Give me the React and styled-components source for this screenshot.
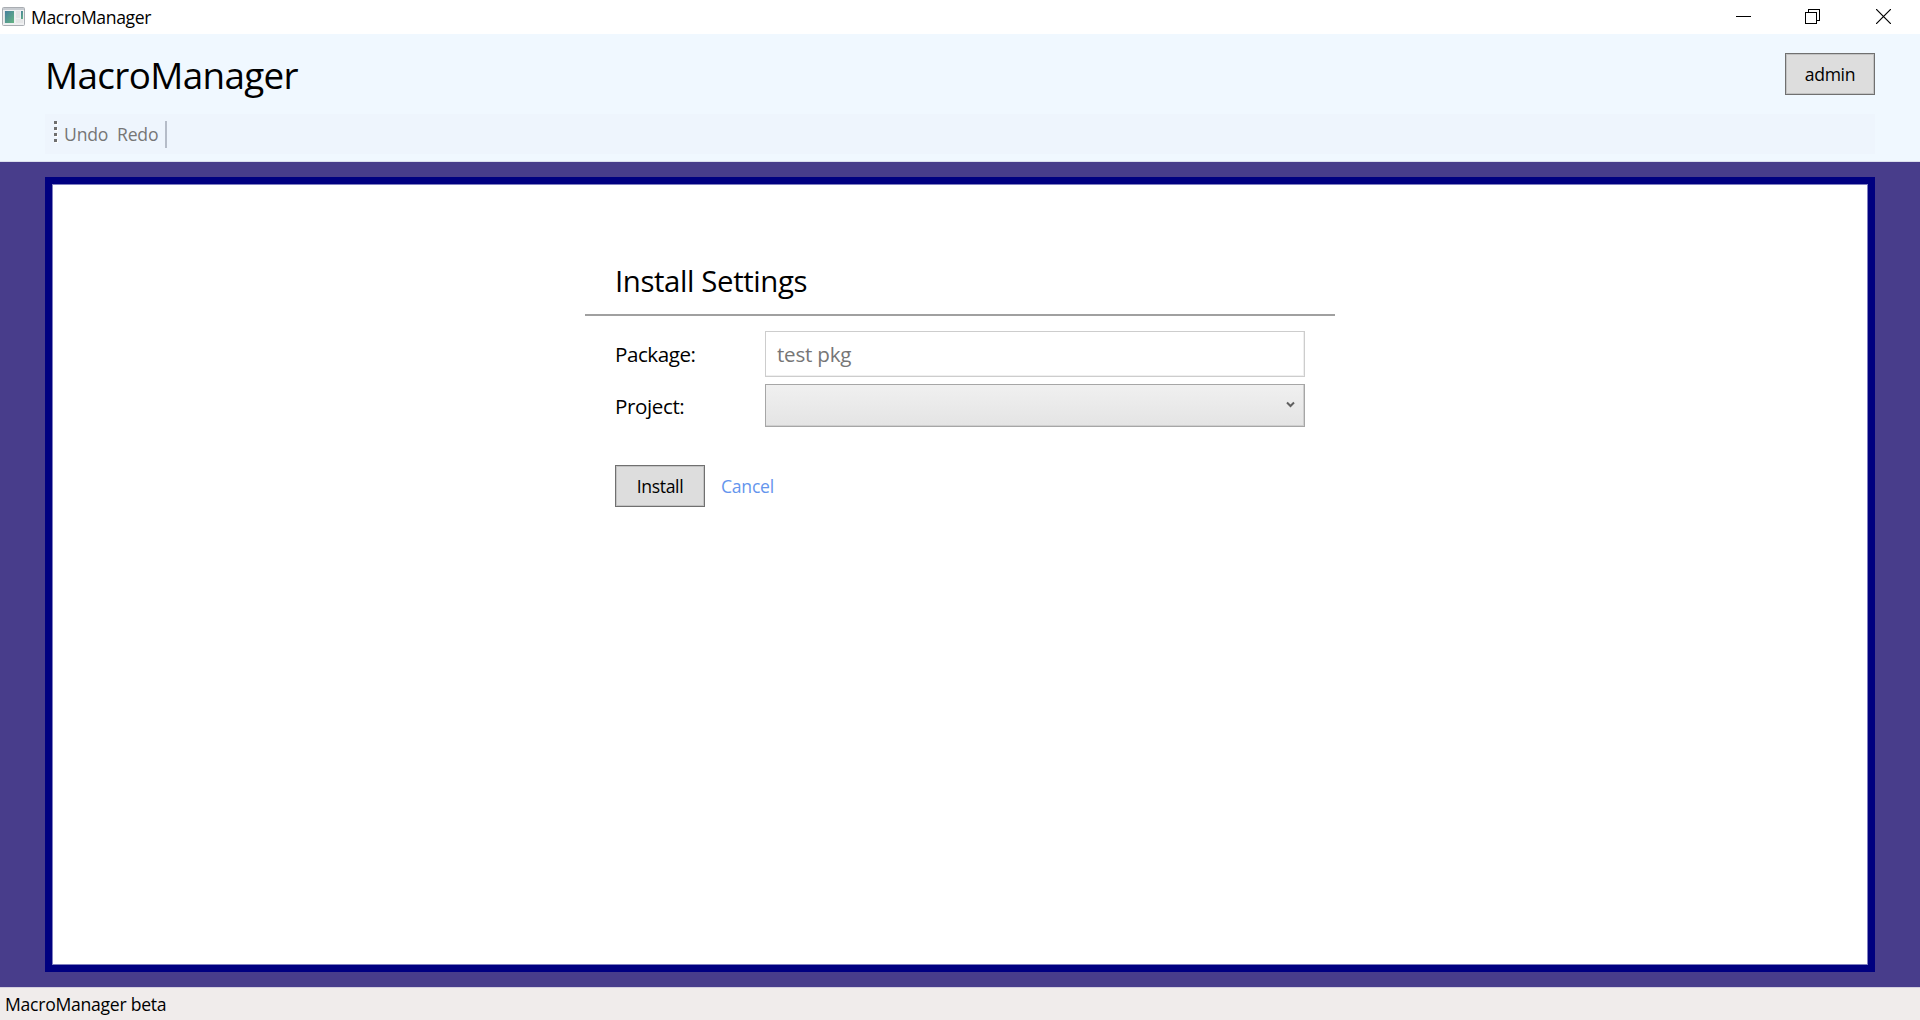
import React from 'react';
import styled, { createGlobalStyle } from 'styled-components';

const GlobalStyle = createGlobalStyle`
  * { box-sizing: border-box; }
  body { margin: 0; overflow: hidden; }
  button, input { font: inherit; letter-spacing: inherit; }
`;

const Window = styled.div`
  display: flex;
  flex-direction: column;
  width: 1920px;
  height: 1020px;
  background: #483d8b;
  color: #000;
  font-family: 'Open Sans', 'Noto Sans', sans-serif;
  font-size: 17.6px;
  line-height: 24px;
  letter-spacing: -0.27px;
  white-space: nowrap;
`;

const TitleBar = styled.div`
  display: flex;
  align-items: center;
  height: 34px;
  padding: 0 29px 0 2px;
  background: #fff;
`;

const Caption = styled.span`
  flex: 1;
  margin-left: 6px;
  letter-spacing: -0.38px;
`;

const Controls = styled.div`
  display: flex;
  align-items: center;
  margin-bottom: 1px;
  svg { display: block; }
  svg + svg { margin-left: 54px; }
  svg:last-child { margin-left: 56px; }
`;

const Header = styled.header`
  height: 128px;
  padding: 0 45px;
  background: #f0f8ff;
  border-bottom: 1px solid #dcdfee;
`;

const Brand = styled.div`
  display: flex;
  align-items: center;
  justify-content: space-between;
  height: 80px;
`;

const AppName = styled.h1`
  margin: 0;
  padding-top: 2px;
  font-size: 36.8px;
  font-weight: 400;
  line-height: 50px;
  letter-spacing: -0.63px;
`;

const Toolbar = styled.div`
  display: flex;
  align-items: center;
  height: 40px;
  padding-left: 9px;
  background: #eef5fd;
  color: #767676;
`;

const Grip = styled.svg`
  display: block;
  margin-bottom: 4px;
`;

const Tool = styled.span`
  width: ${(p) => p.$width}px;
  margin-left: ${(p) => p.$gap}px;
  letter-spacing: -0.2px;
`;

const Divider = styled.span`
  width: 2px;
  height: 27px;
  margin-left: 6px;
  background: #b5bcc8;
`;

const Button = styled.button`
  width: 90px;
  height: 42px;
  padding: 0;
  border: 1px solid #707070;
  border-radius: 0;
  box-shadow: inset 0 0 0 1px #c2c2c2;
  background: #ddd;
  color: #000;
  text-align: center;
  letter-spacing: -0.35px;
`;

const Content = styled.main`
  flex: 1;
  padding: 15px 45px;
  display: flex;
`;

const Panel = styled.section`
  flex: 1;
  border: 7px solid #000080;
  box-shadow: inset 0 0 0 1px #8080c0;
  background: #fff;
`;

const Form = styled.form`
  width: 750px;
  margin: 71px auto 0;
`;

const FormTitle = styled.h2`
  height: 61px;
  margin: 0;
  padding: 6px 30px 0;
  border-bottom: 2px solid #a0a0a0;
  font-size: 29.4px;
  font-weight: 400;
  line-height: 40px;
  letter-spacing: -0.4px;
`;

const Fields = styled.div`
  display: grid;
  grid-template-columns: 150px 540px;
  grid-template-rows: 46px 43px;
  row-gap: 7px;
  align-items: center;
  padding: 15px 30px 0;
  font-size: 20.6px;
  line-height: 28px;
`;

const Label = styled.label`
  letter-spacing: ${(p) => p.$tracking}px;
`;

const TextBox = styled.input`
  width: 100%;
  height: 46px;
  padding: 0 11px;
  border: 1px solid #cdcdcd;
  border-radius: 0;
  box-shadow: inset -1px -1px 0 #efefef;
  background: #fff;
  color: #767676;
  letter-spacing: -0.22px;
  outline: none;
`;

const Dropdown = styled.div`
  display: flex;
  align-items: center;
  justify-content: flex-end;
  height: 43px;
  padding: 0 8px 1px 0;
  border: 1px solid #a6a6a6;
  box-shadow: inset -1px -1px 0 #cfcfcf;
  background: linear-gradient(#f0f0f0, #e4e4e4);
`;

const Actions = styled.div`
  display: flex;
  align-items: center;
  gap: 16px;
  padding: 38px 30px 0;
`;

const CancelLink = styled.a`
  color: #6495ed;
  letter-spacing: -0.25px;
`;

const StatusBar = styled.footer`
  display: flex;
  align-items: center;
  height: 33px;
  padding-left: 5px;
  border-top: 1px solid #d4cfdf;
  background: #f0eceb;
`;

const AppIcon = () => (
  <svg width="23" height="20" viewBox="0 0 23 20">
    <defs>
      <linearGradient id="pane" x1="0" y1="0" x2="1" y2="1">
        <stop offset="0" stopColor="#467f9d" />
        <stop offset="1" stopColor="#65b582" />
      </linearGradient>
    </defs>
    <rect x="0.5" y="0.5" width="22" height="18" rx="1" fill="#eff0f1" stroke="#a9adb2" />
    <path d="M1 2h21" stroke="#c8ccd1" strokeWidth="2" />
    <rect x="2" y="4" width="10" height="12" fill="#e1e4e5" />
    <rect x="3" y="4" width="9" height="12" fill="url(#pane)" />
    <rect x="14" y="4" width="4" height="7" fill="#e3e4e5" />
    <rect x="19" y="4" width="2" height="8" fill="url(#pane)" />
    <rect x="14" y="12" width="7" height="4" fill="#e5e6e7" />
  </svg>
);

const WindowControls = () => (
  <Controls>
    <svg width="15" height="15" viewBox="0 0 15 15" shapeRendering="crispEdges">
      <path d="M0 7.5h15" stroke="#000" />
    </svg>
    <svg width="15" height="15" viewBox="0 0 15 15" fill="none" stroke="#000" shapeRendering="crispEdges">
      <path d="M0.5 3.5h11v11h-11zM3.5 3.5v-3h11v11h-3" />
    </svg>
    <svg width="15" height="15" viewBox="0 0 15 15" stroke="#000" strokeWidth="1.2">
      <path d="M0 0L15 15M15 0L0 15" />
    </svg>
  </Controls>
);

export default function App() {
  return (
    <Window>
      <GlobalStyle />
      <TitleBar>
        <AppIcon />
        <Caption>MacroManager</Caption>
        <WindowControls />
      </TitleBar>
      <Header>
        <Brand>
          <AppName>MacroManager</AppName>
          <Button>admin</Button>
        </Brand>
        <Toolbar>
          <Grip width="4" height="22" viewBox="0 0 4 22">
            <path d="M1 1h3v3h-3zM1 7h3v3h-3zM1 13h3v3h-3zM1 19h3v3h-3z" fill="#fff" />
            <path d="M0 0h3v3h-3zM0 6h3v3h-3zM0 12h3v3h-3zM0 18h3v3h-3z" fill="#6f6f6f" />
          </Grip>
          <Tool $width={44} $gap={6}>Undo</Tool>
          <Tool $width={42} $gap={9}>Redo</Tool>
          <Divider />
        </Toolbar>
      </Header>
      <Content>
        <Panel>
          <Form>
            <FormTitle>Install Settings</FormTitle>
            <Fields>
              <Label $tracking={-0.45}>Package:</Label>
              <TextBox defaultValue="test pkg" readOnly />
              <Label $tracking={-0.4}>Project:</Label>
              <Dropdown>
                <svg width="10" height="8" viewBox="0 0 10 8" fill="none" stroke="#606060" strokeWidth="2">
                  <path d="M1 1.5L4.5 5L8 1.5" />
                </svg>
              </Dropdown>
            </Fields>
            <Actions>
              <Button type="button">Install</Button>
              <CancelLink>Cancel</CancelLink>
            </Actions>
          </Form>
        </Panel>
      </Content>
      <StatusBar>MacroManager beta</StatusBar>
    </Window>
  );
}
